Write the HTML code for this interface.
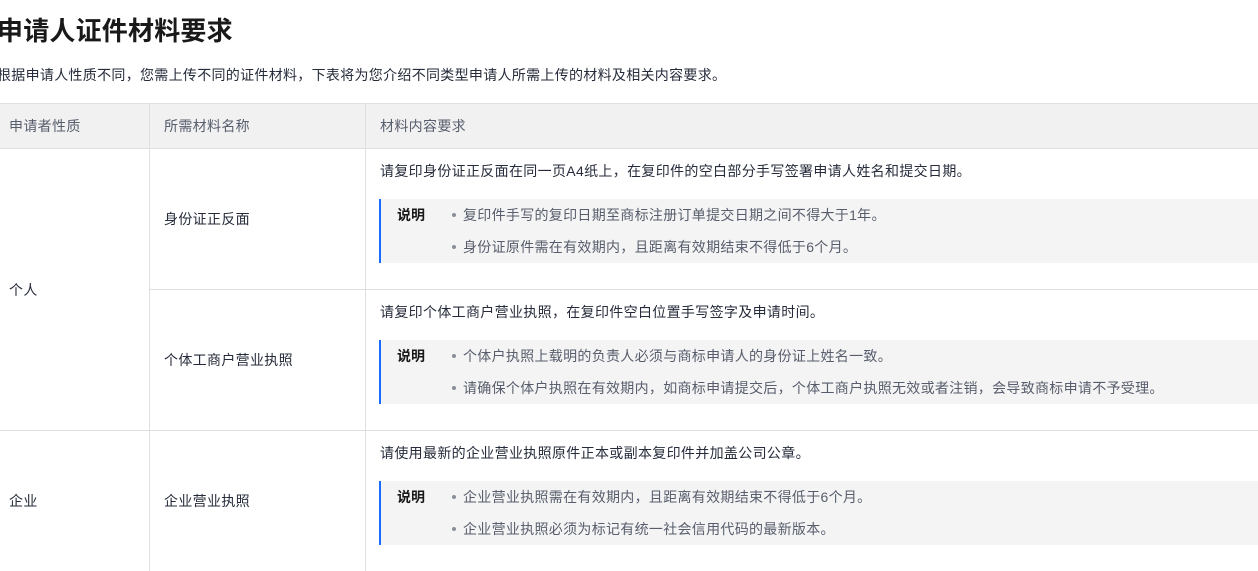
<!DOCTYPE html>
<html><head><meta charset="utf-8"><style>
*{margin:0;padding:0;box-sizing:border-box}
body{width:1258px;height:571px;overflow:hidden;background:#fff;font-family:"Liberation Sans","Noto Sans CJK SC",sans-serif;color:#252b3a;position:relative}
.a{position:absolute;white-space:nowrap}
h1{position:absolute;left:-3px;top:14px;font-size:26px;font-weight:bold;color:#191919;line-height:34px;letter-spacing:0.2px}
.sub{left:-3px;top:66px;font-size:14px;line-height:18px;color:#252b3a;letter-spacing:0.3px}
.hd{position:absolute;left:0;top:103px;width:1258px;height:46px;background:#f1f1f1;border-top:1px solid #dfdfdf;border-bottom:1px solid #dfdfdf}
.t{font-size:14px;line-height:18px;letter-spacing:0.33px}
.hl{position:absolute;height:1px;background:#dfdfdf}
.vl{position:absolute;width:1px;background:#dfdfdf}
.note{position:absolute;left:379px;width:879px;height:64px;background:#f4f4f4;border-left:2px solid #1a6cff}
.note b{position:absolute;left:16px;top:7px;font-size:14px;line-height:18px;color:#191919}
.li{position:absolute;left:82px;font-size:14px;line-height:18px;color:#575d6c;white-space:nowrap;letter-spacing:0.3px}
.li:before{content:"";position:absolute;left:-11px;top:7px;width:4px;height:4px;border-radius:50%;background:#8a8e99}
</style></head><body>
<h1>申请人证件材料要求</h1>
<div class="a sub">根据申请人性质不同，您需上传不同的证件材料，下表将为您介绍不同类型申请人所需上传的材料及相关内容要求。</div>
<div class="hd"></div>
<div class="vl" style="left:149px;top:103px;height:468px"></div>
<div class="vl" style="left:365px;top:103px;height:468px"></div>
<div class="a t" style="left:9px;top:117px;color:#575d6c">申请者性质</div>
<div class="a t" style="left:164px;top:117px;color:#575d6c">所需材料名称</div>
<div class="a t" style="left:380px;top:117px;color:#575d6c">材料内容要求</div>
<div class="hl" style="left:149px;top:289px;width:1109px"></div>
<div class="hl" style="left:0;top:430px;width:1258px"></div>

<div class="a t" style="left:9px;top:281px">个人</div>
<div class="a t" style="left:164px;top:210px">身份证正反面</div>
<div class="a t" style="left:380px;top:162px">请复印身份证正反面在同一页A4纸上，在复印件的空白部分手写签署申请人姓名和提交日期。</div>
<div class="note" style="top:199px"><b>说明</b>
<div class="li" style="top:7px">复印件手写的复印日期至商标注册订单提交日期之间不得大于1年。</div>
<div class="li" style="top:39px">身份证原件需在有效期内，且距离有效期结束不得低于6个月。</div></div>

<div class="a t" style="left:164px;top:351px">个体工商户营业执照</div>
<div class="a t" style="left:380px;top:303px">请复印个体工商户营业执照，在复印件空白位置手写签字及申请时间。</div>
<div class="note" style="top:340px"><b>说明</b>
<div class="li" style="top:7px">个体户执照上载明的负责人必须与商标申请人的身份证上姓名一致。</div>
<div class="li" style="top:39px">请确保个体户执照在有效期内，如商标申请提交后，个体工商户执照无效或者注销，会导致商标申请不予受理。</div></div>

<div class="a t" style="left:9px;top:492px">企业</div>
<div class="a t" style="left:164px;top:492px">企业营业执照</div>
<div class="a t" style="left:380px;top:444px">请使用最新的企业营业执照原件正本或副本复印件并加盖公司公章。</div>
<div class="note" style="top:481px"><b>说明</b>
<div class="li" style="top:7px">企业营业执照需在有效期内，且距离有效期结束不得低于6个月。</div>
<div class="li" style="top:39px">企业营业执照必须为标记有统一社会信用代码的最新版本。</div></div>
</body></html>
